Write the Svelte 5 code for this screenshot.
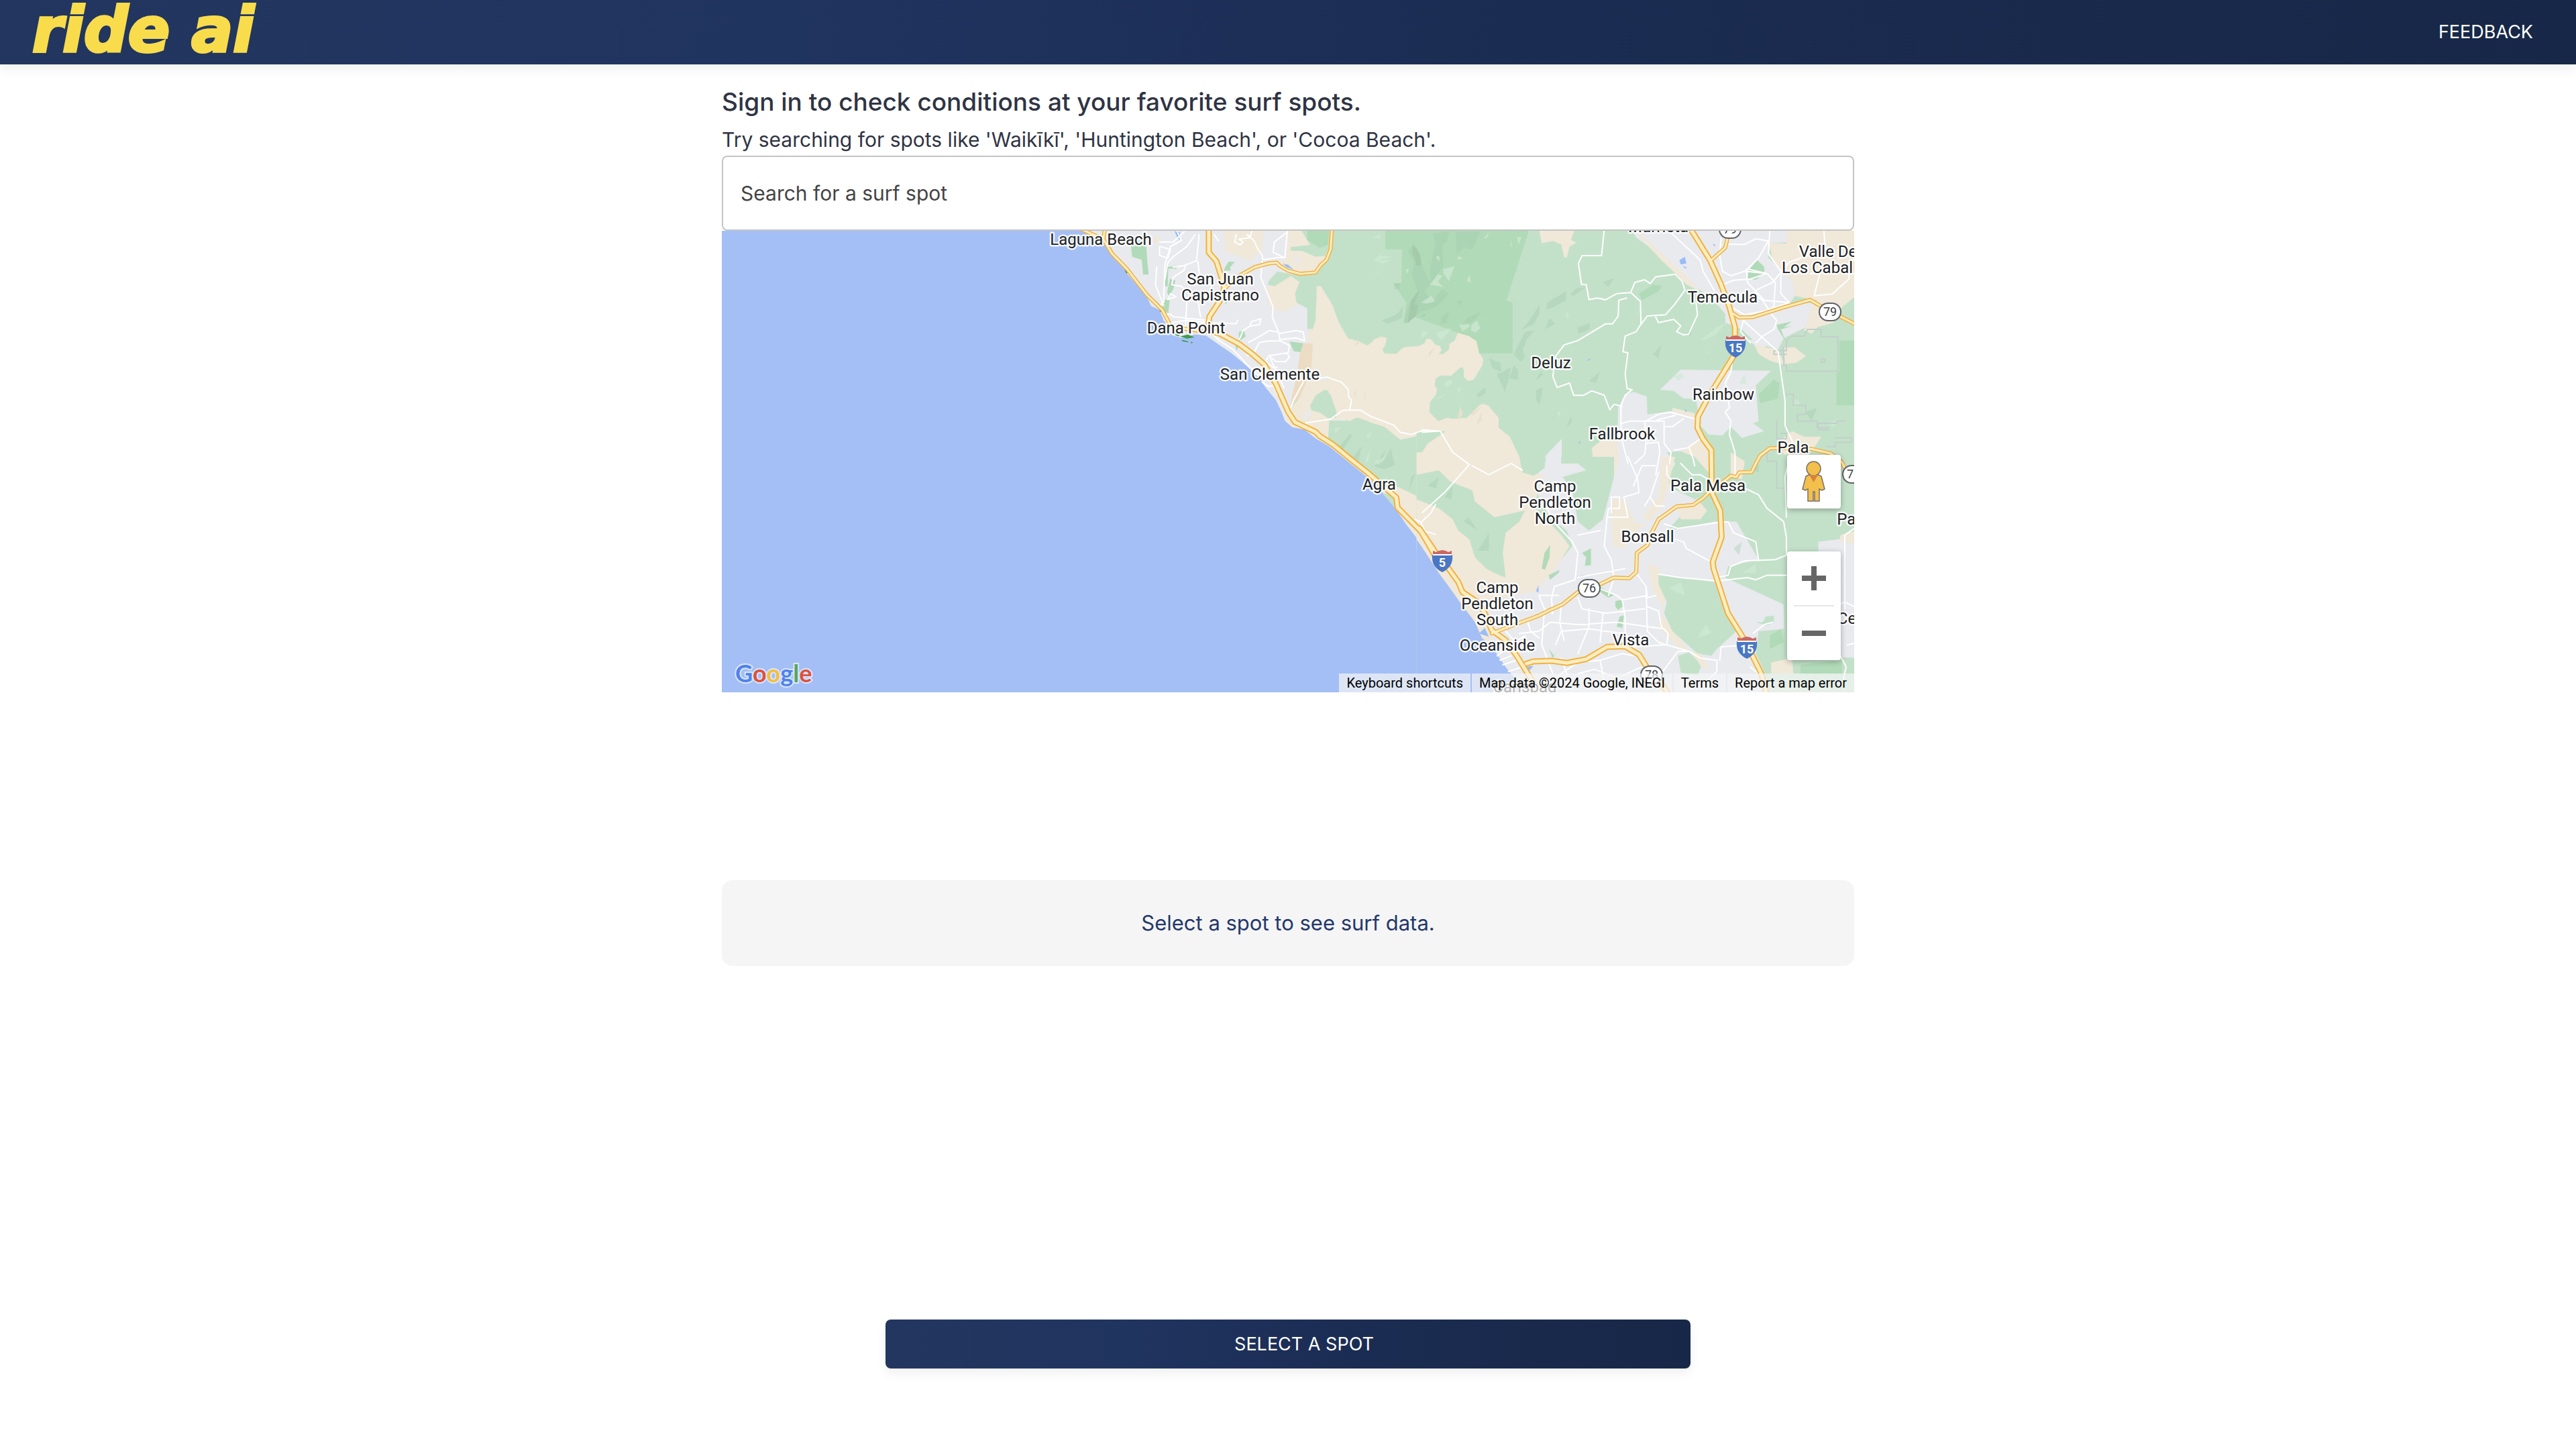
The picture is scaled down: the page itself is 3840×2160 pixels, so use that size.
<script>
  const WEST = 'translate(424 -3) scale(0.408 0.44)';
  const EAST = 'translate(1044 -3) scale(0.4145 0.3333)';
  const HILLS = 'translate(904 -3) scale(0.3333)';

  const westAreas = [
    ['land', 'M270 0L320 30 355 50 385 90 432 135 440 150 510 225 530 262 560 275 575 310 600 345 605 360 640 370 690 358 730 362 780 395 820 420 860 450 890 475 930 512 945 535 985 580 1003 615 1018 650 1045 672 1090 680 1130 710 1180 737 1230 775 1310 835 1350 865 1380 900 1420 945 1460 1000 1510 1060 1568 1130V0Z'],
    ['sand', 'M790 0H940L932 95 925 110 880 105 795 75 800 40Z'],
    ['sand', 'M1030 0H1190L1185 80 1130 150 1060 145 1035 125 1000 120 1025 95Z'],
    ['sand', 'M530 30L565 28 558 45 540 50Z'],
    ['urban', 'M1050 110L1062 95 1070 100 1068 118ZM900 95L918 80 932 95 925 115 905 112Z'],
    ['green', 'M1075 0H1182V60L1165 92 1130 95 1080 75 1040 75 1040 62 1110 55Z'],
    ['park', 'M1100 0H1180L1175 55 1145 65 1100 38Z'],
    ['sand', 'M950 200L990 170 1040 160 1072 180 1055 235 1070 255 1020 280 970 270 960 240Z'],
    ['sand', 'M1135 195H1150L1190 255 1215 320 1245 375 1320 395 1350 375 1390 365 1375 390 1385 420 1450 420 1510 380 1550 375 1568 400V700L1440 712 1380 680 1285 640 1180 650 1175 712 1130 708 1090 680 1045 672 1018 650 1040 600 1060 500 1110 400 1100 350 1120 340Z'],
    ['green', 'M1195 0H1568V400L1550 375 1510 380 1450 422 1385 420 1375 390 1390 365 1350 375 1320 395 1245 375 1215 320 1190 255 1150 195 1135 195 1130 310 1120 340 1100 340 1100 270 1060 250 1055 220 1072 180 1040 160 980 195 955 190 960 175 990 145 1050 155 1130 155 1180 100Z'],
    ['bluff', 'M1078 388H1120L1115 470 1075 570 1035 610 1045 560 1062 500Z'],
    ['park', 'M1035 382L1085 388 1075 418 1050 415ZM1060 580L1068 572 1045 605Z'],
    ['green', 'M1110 600L1130 565 1160 547 1180 548 1207 620 1205 640 1175 642 1150 625 1115 615ZM1545 590L1568 575V650L1545 635Z'],
    ['urban', 'M1080 645L1105 613 1115 620 1105 640ZM1150 500L1172 500 1175 515 1152 512ZM1305 622L1320 618 1335 628 1315 632Z'],
    ['green', 'M1180 650L1240 650 1285 640 1380 670 1440 715 1568 690V720L1510 750 1530 780 1568 830V930L1480 900 1400 870 1350 850 1290 810 1240 775 1175 725Z'],
    ['shade', 'M1210 745L1255 695 1265 700 1225 755ZM1265 775L1300 735 1285 790ZM1345 805L1385 750 1370 800 1405 745 1420 800 1380 815ZM1470 890L1480 840 1495 830ZM1500 900L1510 880 1512 910Z'],
    ['light', 'M1200 675L1225 672 1200 695ZM1315 700L1335 690 1325 712ZM1345 790L1390 770 1360 800ZM1310 790L1330 745 1322 790Z'],
    ['green', 'M1375 898L1400 895 1425 920 1420 945Z'],
    ['sand', 'M1420 870L1568 935V1130L1420 945 1425 915 1415 900Z'],
    ['sand', 'M1568 700V830L1550 800 1515 770 1512 745 1560 732Z'],
    ['park', 'M455 50L510 30 515 105 520 155 500 155 495 105 460 95ZM585 130L628 125 620 135 592 135 590 195 578 195ZM598 170L618 175 612 200 595 232 588 215ZM580 240L597 240 592 285 565 280ZM800 130L812 112 835 112 818 130 820 142 795 142ZM850 350L868 345 875 365 855 378 842 415 835 390 850 380ZM800 235L815 245 800 255Z'],
    ['reef', 'M605 355L640 352 630 365ZM635 365L665 358 688 368 660 372ZM640 376L660 380 668 385 645 382ZM675 382L682 386 676 389ZM432 140L447 146 440 152ZM560 272L570 280 562 282Z'],
    ['lake', 'M615 8L635 12V38L625 30ZM1010 118L1030 122 1050 138 1025 130Z'],
  ];

  const eastAreas = [
    ['green', 'M-20 0H1560V2090H-20Z'],
    ['sand', 'M420 0H550L535 50 555 62 530 80 520 130 510 125 500 70 470 55 430 65Z'],
    ['urban', 'M750 0H1310V60L1255 65 1245 130 1330 230 1345 290 1320 340 1420 330 1380 440 1300 490 1280 540 1200 510 1150 450 1090 420V380L1040 310 960 240 870 130 770 40Z'],
    ['sand', 'M770 20L800 35 860 110 960 225 1000 280 950 250 920 210 860 140Z'],
    ['sand', 'M1310 0H1560V300L1540 320 1510 350 1480 420 1375 455 1400 350 1420 320 1340 300 1330 230 1260 150 1250 65H1310Z'],
    ['park', 'M1175 185L1205 140 1230 170V200L1200 228 1170 222ZM1275 430L1330 415 1300 440 1330 435 1290 450 1308 505 1280 450ZM1500 500H1560V790H1490V640H1500ZM1210 740L1265 675 1285 690 1280 760 1215 780ZM780 290L830 250 862 255 850 280 790 320Z'],
    ['light', 'M1000 500L1060 440 1095 420 1050 480ZM1330 750L1360 780 1340 800ZM1460 870L1500 850 1480 890Z'],
    ['shade', 'M600 680L640 640 625 690ZM830 560L860 520 850 580ZM950 470L970 440 965 480ZM650 240L690 220 670 260ZM1380 820L1420 800 1400 860Z'],
    ['sand', 'M-20 500L30 490 60 540 95 510 125 465 190 500 205 550 220 590 190 660 170 680 150 650V615L100 640 50 660 40 730 25 770V820L60 862 160 845 210 785 235 790 270 840 275 890 315 930 350 1020V1090H-20Z'],
    ['green', 'M-20 910L85 905 50 935 20 960 0 1000H-20Z'],
    ['urban', 'M930 630L1255 635 1200 700 1210 860 1190 870 1230 905 1150 935 1110 885 1080 925 1030 920 1000 880 985 760 940 760 905 725 855 720Z'],
    ['light', 'M905 660L930 645 945 660 920 680ZM1140 690L1160 650 1165 695Z'],
    ['urban', 'M1015 560L1200 490 1240 520 1220 545 1180 510Z'],
    ['green', 'M1010 570L1090 520 1110 470 1180 505 1230 560 1180 600 1020 600Z'],
    ['sand', 'M1195 520L1280 540 1305 610 1250 590 1210 560ZM1300 530L1340 530 1380 570 1345 600 1305 605ZM1370 450L1430 430 1400 470Z'],
    ['sand', 'M1285 950L1330 905 1375 930 1435 930 1420 960 1390 1010 1300 1010ZM900 800L980 825V855L900 830Z'],
    ['urban', 'M440 1020L502 940V1040L700 1040 705 800 730 740 760 730 808 750 810 830 900 815 980 850 1000 940 930 1000 1010 1000 1010 1180 880 1350 1050 1310 1130 1310 1210 1480 1100 1510 1090 1560 1300 1680 1310 2090H120V1640L420 1600 540 1420 520 1350 460 1290 400 1150Z'],
    ['sand', 'M610 980L700 890 705 1050 690 1110 620 1110ZM930 1000L1000 940 1035 990 1035 1100 1000 1110 960 1030ZM1110 1000L1160 1040 1150 1120 1110 1110Z'],
    ['green', 'M880 1000L930 995 980 1020 1030 1090 1040 1180 980 1210 900 1160 880 1120 910 1050Z'],
    ['sand', 'M-20 1020H350L360 1090 440 1100 400 1240 500 1370 530 1420 480 1520 410 1620 260 1660 180 1650 140 1620 260 1830 -20 1430Z'],
    ['green', 'M350 1020H445L440 1070 400 1105 360 1090ZM-20 1100L60 1080 100 1130 180 1170 190 1220 260 1290 370 1260 350 1310 300 1360 290 1450 300 1560 260 1540 230 1520 190 1470 170 1390 130 1350 110 1300 60 1250 -20 1210Z'],
    ['shade', 'M20 1150L60 1110 50 1160ZM80 1200L110 1150 105 1210ZM200 1440L240 1360 240 1440ZM150 1310L165 1290 200 1350ZM600 1260L640 1220 630 1290ZM1190 1080L1210 1050V1090ZM1120 1430L1150 1400 1140 1460Z'],
    ['park', 'M430 1520L440 1450 460 1415 458 1470 442 1525ZM575 1450L607 1430V1505L585 1508 590 1470ZM640 1600L690 1640 670 1650 635 1620ZM695 1665L715 1660 725 1685 705 1705 695 1690ZM455 1550L495 1525 490 1540 460 1570ZM455 1880L475 1910 500 1865 470 1920ZM700 1780L710 1735 725 1730 720 1785Z'],
    ['green', 'M500 1020H690V1110L650 1300 600 1350 560 1310 540 1170 505 1110 590 1080 560 1050H500Z'],
    ['sand', 'M680 1210H725L770 1320H810L760 1360 730 1430 685 1420ZM860 1020H910L890 1120 870 1220 820 1310 790 1290 850 1200ZM915 1250L1000 1225 1025 1260 1000 1300 930 1300Z'],
    ['urban', 'M1425 1400L1554 1380V2000L1370 1900 1310 1700 1420 1700Z'],
    ['sand', 'M1505 1370L1560 1350V1410L1500 1400ZM810 1500L850 1515 860 1560 880 1640 860 1720 960 1890 920 1870 850 1780 870 1700 830 1620Z'],
    ['green', 'M850 1545L930 1560 1050 1580 1090 1700 1130 1800 1060 1880 1040 1910 990 1900 900 1800 870 1720 880 1670 850 1590Z'],
    ['light', 'M890 1610L930 1580 945 1640ZM990 1830L1020 1770 1040 1810ZM1150 1540L1200 1500 1200 1540Z'],
    ['green', 'M920 1910L960 1895 1005 1950 990 2000 930 1985ZM1210 1800L1300 1790 1330 1870 1320 1920 1350 1900 1560 1920V2090H1240L1230 1980 1200 1900ZM1200 1760L1225 1760 1235 1735 1265 1730V1760L1240 1775Z'],
    ['park', 'M1360 1950L1510 1930V1990H1360ZM1250 1820L1290 1790 1300 1850 1250 1880Z'],
    ['sand', 'M1255 1940L1330 1920 1335 1990 1255 1990ZM965 1890L1000 1900 1030 1960 1010 1970Z'],
    ['sand', 'M-20 1330L130 1610 235 1790 255 1860 215 1830 -20 1440Z'],
    ['water', 'M-20 1390L0 1425 60 1540 90 1590 130 1660 190 1760 215 1830 245 1860 300 1960 340 2020 370 2090H-20Z'],
    ['lake', 'M925 140L945 125 950 155 930 160ZM938 165L952 175 945 178ZM1045 65L1056 75 1050 78ZM595 585L607 580 598 592ZM945 805L953 815 947 820ZM563 955L570 948 566 963ZM410 1620L418 1595 419 1628ZM205 1810L225 1785 240 1825ZM370 1960L400 1955 380 1985ZM555 1560L580 1550 575 1560Z'],
  ];

  const hillAreas = [
    ['green', 'M40 0H940V560H680L240 560 40 300Z'],
    ['sand', 'M0 320L20 345 45 415 88 490 140 505 178 525 205 495 235 482 262 488 255 520 242 540 252 558 303 560 330 535 350 528 405 525 430 512 440 492 460 494 480 520 500 524 507 545 470 585 447 610 450 632 480 625 505 600 520 555 540 540 542 515 565 500 580 465 630 480 663 502 675 560 693 580 690 610 650 675 625 680 605 662 610 635 595 615 580 630 550 657 500 657 480 670 475 700 487 717 480 745 455 775 452 832 490 862 530 845 555 850 625 845 690 783 715 790 762 845V900H305L200 870 130 842 95 860 50 845 22 780 15 750 0 730Z'],
    ['park', 'M255 0H900L797 320 825 330V557H677L663 502 630 480 580 465 380 392 360 420 335 422 350 333 293 245 327 242 330 92H255Z'],
    ['shade', 'M465 20L540 12 530 60 510 70 515 165 455 250 430 280 480 340 380 392 360 420 340 420 360 340 400 280 375 210 385 150 355 100 380 70 410 110 420 165 455 240 455 180 480 60ZM570 15L680 12 650 85 630 92 610 80 575 110ZM510 270L540 290 490 345 430 370ZM620 400L690 368 640 420 600 425ZM510 390L540 370 530 420 500 430ZM575 325L603 320 585 345ZM755 320L782 288 765 310ZM815 175L855 190 845 190ZM290 243L325 243 315 265 300 275Z'],
    ['ridge', 'M378 70L400 95 412 125 415 163 395 165 385 125 375 105ZM408 275L385 340 403 340 390 392 355 420 370 320ZM410 395L435 378 430 390Z'],
    ['light', 'M203 145L250 90 230 120 285 125ZM205 140L290 140 240 155ZM197 208L262 180 210 205ZM205 40L232 22 230 45ZM455 250L490 205 512 210 490 235 515 262ZM515 180L565 168 540 235 515 200ZM480 125L497 122 497 148ZM585 120L603 135 578 138ZM620 235L630 205 640 240ZM415 330L460 300 478 325 440 335ZM585 428L632 428 630 440 600 458ZM640 430L665 410 680 445 660 465 638 455ZM418 460L450 458 418 492ZM480 468L550 445 505 500ZM520 690L550 670 555 690 525 710ZM575 715L600 712 580 735ZM470 760L525 742 500 758ZM348 180L362 180 350 205ZM1065 368L1078 385 1065 408ZM1025 820L1040 815 1030 848ZM695 45L720 15 710 40ZM845 35L865 40 850 72ZM815 35L822 80 817 80Z'],
    ['shade', 'M240 410L310 380 335 345 330 400 265 425ZM860 455L900 410 945 340 945 380 920 425ZM980 330L1065 278 1062 320 1000 355 975 360ZM970 450L990 400 1015 425ZM1080 295L1110 265 1150 262 1100 300ZM830 560L880 460 925 455 890 490 870 540 880 575 860 595ZM720 580L770 600 775 640 735 625ZM780 640L815 620 810 660 790 730 755 650ZM830 610L848 630 848 675 810 670ZM665 740L700 710 705 735 670 755ZM930 720L960 710 945 790 930 765ZM925 680L950 640 960 655ZM1115 440L1170 422 1170 450 1120 470ZM1065 890L1085 840 1090 865Z'],
    ['mesa', 'M120 525L140 490 135 515ZM447 560L475 530 455 570ZM115 745L125 715 122 750ZM158 730L170 785 165 740ZM580 840L590 795 603 830 585 850ZM635 830L690 790 650 835ZM663 875L685 820V860Z'],
  ];

  const westStreets = [
    'M620 0L640 40 600 60 580 120 575 250 555 262M690 20L660 60 610 95 590 115 580 170M560 60L600 70 590 100 560 90ZM550 130L545 190 560 225 575 260M610 130L650 125 695 108 705 20M655 120L650 140 610 165 605 190 640 195 655 210 640 215 660 245 655 330M700 110L705 150 750 195 745 225 700 240 710 300M600 220L590 240 620 230ZM585 290L600 290 610 298 735 310M560 45L610 45 650 10M590 320L660 310 740 318 840 322 845 310M760 20L775 40M840 20L835 45 855 55 865 45 850 35 890 30 900 0M880 20L905 40 920 70 935 90 938 105 990 98 1018 98 1028 0M1028 10L980 45 975 80 1015 98',
    'M935 110L930 165 975 265 972 300 995 350 1000 380 960 380 925 385 905 420 880 430M995 350L960 345 925 365 885 385M930 305L895 315 890 330 865 345 852 375M930 305L925 325 890 330M995 355L1060 345 1085 350 1090 380 1060 370 1000 375M1000 380L1035 395 1030 420 960 430 940 460 930 445 905 430M960 430L985 450 1020 450 1035 435 1025 420M965 440L985 480 1000 510 1015 540M950 450L975 470 990 470M935 520L960 535 975 530 990 560M745 350L780 380 830 410 880 460 930 505',
    'M1040 605L1050 580 1085 520M1130 510L1170 502 1225 520 1250 545 1250 570 1262 580 1255 612M1095 658L1185 645 1230 615 1295 615 1330 635 1415 665 1440 690 1480 697 1525 682 1568 685M1568 935L1550 965 1515 995 1495 985M1515 995L1530 1025 1568 1035',
  ];
  const eastStreets = [
    'M655 0L645 120 575 120 562 155 573 248 590 250 600 317 630 310 660 318 700 290 750 285 765 240 800 228 820 245 840 215 910 203 935 235 945 275 910 335 875 385 810 390 785 430 770 460 730 480 722 550 740 555 730 650 737 715 755 720 730 745 715 790 715 870 720 950 740 1050M750 285L785 325 787 430M735 310L707 320 705 390 685 425 660 425 560 500 510 520 480 570 470 660 485 710 530 690 545 745 580 745 610 725 655 745 675 810 690 785 720 795M840 395L850 420 905 405 930 435 915 460 940 475 958 472 990 385 985 330',
    'M890 12L1000 140 1010 190 1050 275M1075 40L1070 120 1080 190 1110 210 1160 190 1240 200 1170 180 1210 130 1245 55 1200 45 1160 70 1105 70M1250 12L1245 110 1290 190 1290 290 1320 330 1230 320 1170 240 1165 180M1080 250L1120 230 1180 225 1240 200 1270 240 1265 350 1245 360 1225 320 1190 290M1200 275L1260 240 1320 150 1450 90 1445 12M1395 200L1430 200 1410 300 1475 292 1535 225V150M1155 410L1145 460 1180 510M1155 410L1280 550 1305 770 1305 880 1335 960M1110 350L1160 385 1245 365 1275 410 1265 450 1225 480 1200 510M1240 365L1320 330',
    'M1120 560L1110 640 1090 690 1105 800 1090 820 1110 860 1105 920 1125 1000 1125 1110M715 870L750 860 800 860 805 960 850 955M800 860L870 860V960L895 1000 890 1050M805 860L850 830 890 820 980 850M845 855L910 835M870 885L900 885 940 850M805 960L800 1010 765 1050M850 955L855 1000 840 1100M1000 940L955 980 905 990M960 980L975 1030 980 1060',
    'M0 900L65 905 110 1000 170 1055 80 1180 0 1270M180 1060L240 1100 320 1050 360 1080M0 910L60 905',
    'M740 1020L775 1120 780 1180 725 1200 740 1290 665 1290 655 1420 680 1480 690 1560M850 1090L820 1200 840 1240 870 1240M820 1200L800 1240M760 1150L780 1090 790 1060 840 1060M665 1290L670 1250 710 1250 710 1200 680 1200 680 1270M440 1230L480 1320 540 1400 560 1450 550 1570 475 1600 465 1660 470 1720 440 1700 420 1640 490 1640M730 1520L600 1550 560 1560M560 1370L640 1350M770 1540L805 1600 810 1650 840 1640M805 1600L810 1800 850 1850 960 1890 1000 1920 1060 1930M640 1610L700 1640 720 1660 810 1640M720 1660L730 1740 730 1860M560 1650L575 1700 660 1720 800 1700M500 1680L495 1760 510 1840M440 1700L430 1860 470 1990M600 1700V1780L560 1900M650 1720L640 1850M350 1810L420 1800 460 1760 560 1770 700 1760 870 1790M690 1560L670 1640M810 1690L850 1710 860 1780 885 1810 880 1860 760 1870M480 1860L500 1800 600 1790 720 1810 790 1860',
    'M300 1800L330 1840 330 1900M270 1910L330 1850 370 1820M280 1930L320 1910M290 1950L340 1930M310 1980L360 1960M380 1760L390 1800 420 1830M440 2030L500 1990 560 1940 640 1930 720 1900 760 1910M560 1990L620 1970 700 2010 790 1960M500 1920L540 2060M640 1930L660 2060M860 1990L920 1890 960 1890M1060 1930L1060 1980 1010 2040M1070 1930L1075 1870 1130 1865M1180 1960L1260 2040M1190 1810L1230 1770 1260 1760',
    'M870 1320L920 1340 1060 1315 1100 1310 1120 1360 1200 1400 1210 1485M850 1370L940 1400 950 1430 1040 1490M850 1545L930 1560 1060 1575 1170 1560 1200 1570 1240 1550 1310 1550M1060 1560L1100 1550 1110 1510 1160 1485 1270 1480 1310 1460 1310 1380 1300 1310 1240 1250 1210 1190 1160 1160M1310 1290L1305 1110 1315 1060M1520 1700V1370L1554 1340M1554 1690L1520 1670 1500 1680M1500 1900L1525 1960 1510 2040M930 1050L970 1100 1000 1100 1040 1130M880 1060L880 1100 930 1170M1530 1860L1554 1855',
  ];

  const roads = [
    { tile: WEST, kind: 'highway', d: 'M270 0L355 35 387 85 440 135 515 225 570 275 590 310 605 335 660 340 735 350M360 0L355 35' },
    { tile: WEST, kind: 'highway', d: 'M800 200L850 160 908 130 960 117 988 115 1000 126 1030 142 1075 153 1130 148 1150 122 1170 105 1185 70 1190 0' },
    { tile: EAST, kind: 'highway', d: 'M250 1810L345 1765 420 1730 460 1705 505 1680 560 1625 640 1590 690 1560 745 1563 770 1535 772 1450 810 1415 825 1360 850 1300 915 1242 975 1235 1010 1205 1030 1180 1090 1125 1110 1105 1130 1110 1140 1090 1185 1088 1200 1050 1215 1015 1250 982 1290 980 1400 985 1470 1005 1510 1045 1520 1070' },
    { tile: EAST, kind: 'highway', d: 'M1100 30L1090 85 1040 140' },
    { tile: EAST, kind: 'highway', d: 'M1120 380L1140 397 1190 395 1290 355 1395 318 1425 340 1500 390 1560 428' },
    { tile: EAST, kind: 'freeway', d: 'M375 1945L400 1935 465 1932 520 1942 590 1925 665 1870 730 1868 780 1905 810 1965 870 2050 890 2090' },
    { tile: WEST, kind: 'freeway', d: 'M740 0V80L768 110 785 160 797 200 780 245 742 298 735 345 780 355 850 390 900 425 943 460 985 525 1030 620 1055 655 1130 688 1145 702 1195 732 1255 778 1325 830 1375 870 1425 910 1430 945 1515 1025 1565 1105' },
    { tile: EAST, kind: 'freeway', d: 'M-10 1340L50 1450 95 1520 130 1580 145 1625 205 1675 225 1720 250 1795 300 1840 340 1910 400 2030 420 2090' },
    { tile: EAST, kind: 'freeway', d: 'M965 0L1035 140 1075 250 1105 350 1125 440V560L1085 640 1035 740 992 840 990 890 1010 940 1040 990 1042 1180 1072 1260 1077 1380 1045 1490 1048 1520 1100 1720 1160 1840 1220 1990 1240 2090' },
  ];

  const labels = [
    { x: 565, y: 21, lines: ['Laguna Beach'] },
    { x: 743, y: 80, lines: ['San Juan', 'Capistrano'] },
    { x: 692, y: 153, lines: ['Dana Point'] },
    { x: 817, y: 222, lines: ['San Clemente'] },
    { x: 980, y: 386, lines: ['Agra'] },
    { x: 1236, y: 205, lines: ['Deluz'] },
    { x: 1396, y: 2, lines: ['Murrieta'] },
    { x: 1492, y: 107, lines: ['Temecula'] },
    { x: 1493, y: 252, lines: ['Rainbow'] },
    { x: 1342, y: 311, lines: ['Fallbrook'] },
    { x: 1597, y: 331, lines: ['Pala'] },
    { x: 1649, y: 39, lines: ['Valle De', 'Los Caballos'] },
    { x: 1242, y: 389, lines: ['Camp', 'Pendleton', 'North'] },
    { x: 1470, y: 388, lines: ['Pala Mesa'] },
    { x: 1380, y: 464, lines: ['Bonsall'] },
    { x: 1156, y: 540, lines: ['Camp', 'Pendleton', 'South'] },
    { x: 1156, y: 626, lines: ['Oceanside'] },
    { x: 1355, y: 618, lines: ['Vista'] },
    { x: 1700, y: 438, lines: ['Pauma'] },
    { x: 1698, y: 586, lines: ['Center'] },
    { x: 1197, y: 688, lines: ['Carlsbad'] },
  ];

  const interstates = [
    { x: 1511, y: 172, n: '15' },
    { x: 1074, y: 492, n: '5' },
    { x: 1528, y: 621, n: '15' },
  ];
  const stateRoutes = [
    { x: 1503, y: -2, n: '79' },
    { x: 1652, y: 121, n: '79' },
    { x: 1293, y: 533, n: '76' },
    { x: 1687, y: 363, n: '76' },
    { x: 1386, y: 662, n: '78' },
  ];

  const brand = [['b', 'G'], ['r', 'o'], ['y', 'o'], ['b', 'g'], ['g', 'l'], ['r', 'e']];
</script>

<header class="topbar">
  <a class="logo" href="/">ride ai</a>
  <button class="feedback" type="button">Feedback</button>
</header>

<main class="content">
  <h1>Sign in to check conditions at your favorite surf spots.</h1>
  <p class="hint">Try searching for spots like 'Waikīkī', 'Huntington Beach', or 'Cocoa Beach'.</p>
  <input class="search" type="text" aria-label="Search for a surf spot" placeholder="Search for a surf spot" />

  <section class="map" aria-label="Map">
    <svg class="canvas" viewBox="0 0 1688 688" preserveAspectRatio="xMidYMid slice">
      <g transform={WEST}>
        {#each westAreas as [kind, d]}<path class={kind} {d} />{/each}
      </g>
      <g transform={EAST}>
        {#each eastAreas as [kind, d]}<path class={kind} {d} />{/each}
      </g>
      <g transform={HILLS}>
        {#each hillAreas as [kind, d]}<path class={kind} {d} />{/each}
      </g>
      <g transform={WEST}>
        {#each westStreets as d}<path class="street" {d} />{/each}
      </g>
      <g transform={EAST}>
        <path class="boundary" d="M1300 530V610H1310V637H1495V483H1435V450H1385L1375 480H1330L1310 500V545H1265V562H1310M1435 582H1448V598H1435ZM1310 740H1335V790H1380V830H1350V860H1420V890H1460V900H1425V870H1490V860H1520M1275 860V940H1310V915H1290M1485 935H1545V955H1485V975H1455M1240 1000V1040H1275V1160H1300" />
        {#each eastStreets as d}<path class="street" {d} />{/each}
      </g>
      {#each roads as road}
        <g transform={road.tile}><path class="casing {road.kind}" d={road.d} /></g>
      {/each}
      {#each roads as road}
        <g transform={road.tile}><path class="surface {road.kind}" d={road.d} /></g>
      {/each}
      {#each labels as label}
        {#each label.lines as line, i}
          <text class="place" x={label.x} y={label.y + i * 24}>{line}</text>
        {/each}
      {/each}
      {#each interstates as s}
        <g transform="translate({s.x} {s.y})">
          <path fill="#4a77c4" d="M-15 -9H15C16 3 12 11 0 17C-12 11 -16 3 -15 -9Z" />
          <path fill="#fff" d="M-14 -11H14V-8H-14Z" />
          <path fill="#cb6663" d="M-14 -10V-15L-9 -13 -5 -15 0 -16 5 -15 9 -13 14 -15V-10Z" />
          <text class="shield" x="0" y="9">{s.n}</text>
        </g>
      {/each}
      {#each stateRoutes as s}
        <g transform="translate({s.x} {s.y})">
          <rect x="-16" y="-13" width="32" height="26" rx="13" fill="#fff" stroke="#5f6368" stroke-width="2" />
          <text class="route" x="0" y="6">{s.n}</text>
        </g>
      {/each}
    </svg>

    <a class="google" href="https://maps.google.com" aria-label="Google">{#each brand as [tone, ch]}<span class={tone}>{ch}</span>{/each}</a>

    <div class="controls">
      <button class="control" type="button" aria-label="Street View">
        <svg width="36" height="62" viewBox="0 0 36 62">
          <g fill="#f2c04b" stroke="#77706a" stroke-width="1.5">
            <path d="M10 21L6 23 1 42 5 44 9 42 9 60H17V46H19V60H26V42L30 44 34 42 29 23 25 21Z" />
            <circle cx="17.500" cy="11.500" r="10.500" />
          </g>
          <path fill="#d58340" d="M11 21H24L17.500 32Z" />
        </svg>
      </button>
      <div class="zoom">
        <button type="button" aria-label="Zoom in">
          <svg width="36" height="36" viewBox="0 0 36 36"><path fill="#666" d="M14 0h8v14h14v8H22v14h-8V22H0v-8h14z" /></svg>
        </button>
        <button type="button" aria-label="Zoom out">
          <svg width="36" height="36" viewBox="0 0 36 36"><path fill="#666" d="M0 14h36v8H0z" /></svg>
        </button>
      </div>
    </div>

    <div class="legal">
      <button type="button">Keyboard shortcuts</button>
      <span>Map data ©2024 Google, INEGI</span>
      <a href="https://www.google.com/help/terms_maps/">Terms</a>
      <a href="https://www.google.com/maps">Report a map error</a>
    </div>
  </section>

  <p class="empty">Select a spot to see surf data.</p>
  <button class="select" type="button">Select a spot</button>
</main>

<style>
  :global(body) {
    background: #fff;
    font-family: Inter, "Liberation Sans", sans-serif;
    color: #2f3443;
  }

  button,
  input {
    font: inherit;
  }

  button {
    border: 0;
    padding: 0;
    background: none;
    cursor: pointer;
  }

  .topbar {
    box-sizing: border-box;
    height: 96px;
    padding: 0 64px 0 48px;
    display: flex;
    align-items: center;
    justify-content: space-between;
    background: linear-gradient(90deg, #23365f, #203460 30%, #1b2c52 60%, #172747);
    box-shadow: 0 8px 16px rgba(0, 0, 0, 0.06);
  }

  .logo {
    padding: 0 8px 4px 0;
    color: #f8dc4c;
    font: italic 700 92px/92px "DejaVu Sans", sans-serif;
    -webkit-text-stroke: 4px #f8dc4c;
    text-decoration: none;
  }

  .feedback {
    color: #fff;
    font-size: 27px;
    line-height: 48px;
    text-transform: uppercase;
  }

  .content {
    max-width: 1688px;
    margin: 0 auto;
    padding: 24px 0 120px;
    display: flex;
    flex-direction: column;
  }

  h1 {
    margin: 0;
    font-size: 37px;
    font-weight: 500;
    line-height: 64px;
  }

  .hint {
    margin: 0;
    font-size: 30px;
    line-height: 48px;
  }

  .search {
    box-sizing: border-box;
    width: 100%;
    height: 112px;
    padding: 0 26px;
    border: 2px solid #c4c4c4;
    border-radius: 8px;
    background: #fff;
    color: #444;
    font-size: 30px;
  }

  .search::placeholder {
    color: #444;
    opacity: 1;
  }

  .map {
    position: relative;
    height: 688px;
    overflow: hidden;
    background: #a4bff5;
    font-family: Roboto, "Liberation Sans", sans-serif;
  }

  .canvas {
    display: block;
    width: 100%;
    height: 100%;
  }

  .land,
  .urban { fill: #e8eaee; }
  .green { fill: #c3e1c9; }
  .park { fill: #b1dab8; }
  .sand { fill: #f0e8d9; }
  .bluff { fill: #ebdcc3; }
  .shade { fill: #9fc9a9; fill-opacity: 0.35; }
  .ridge { fill: #a5caab; }
  .mesa { fill: #e8dfcc; }
  .light { fill: #d0e9d4; fill-opacity: 0.7; }
  .reef { fill: #3f9b50; }
  .water { fill: #a4bff5; }
  .lake { fill: #9bbcf6; }

  .street,
  .boundary,
  .casing,
  .surface {
    fill: none;
    stroke-linejoin: round;
    stroke-linecap: round;
    vector-effect: non-scaling-stroke;
  }

  .street { stroke: #fff; stroke-width: 2px; }
  .boundary { stroke: #c3cfcb; stroke-width: 2px; }
  .casing { stroke: #f1b140; }
  .surface { stroke: #fdedc0; }
  .casing.freeway { stroke-width: 9px; }
  .surface.freeway { stroke-width: 5px; }
  .casing.highway { stroke-width: 6px; }
  .surface.highway { stroke-width: 3px; }

  .place {
    fill: #202124;
    stroke: #fff;
    stroke-opacity: 0.85;
    stroke-width: 5px;
    stroke-linejoin: round;
    paint-order: stroke;
    font-size: 24px;
    text-anchor: middle;
  }

  .shield,
  .route {
    text-anchor: middle;
    font-size: 18px;
  }

  .shield { fill: #fff; font-weight: 700; }
  .route { fill: #3c4043; }

  .google {
    position: absolute;
    left: 20px;
    bottom: 7px;
    font: 700 36px/44px Lato, sans-serif;
    text-decoration: none;
    -webkit-text-stroke: 4px #dbe6fb;
    paint-order: stroke;
  }

  .b { color: #4f82ec; }
  .r { color: #dc5140; }
  .y { color: #f3bf3f; }
  .g { color: #56a55f; }

  .controls {
    position: absolute;
    right: 20px;
    bottom: 48px;
    display: flex;
    flex-direction: column;
    gap: 64px;
  }

  .control,
  .zoom {
    width: 80px;
    border-radius: 4px;
    background: #fff;
    box-shadow: 0 2px 8px rgba(0, 0, 0, 0.3);
  }

  .control,
  .zoom button {
    height: 80px;
    display: flex;
    align-items: center;
    justify-content: center;
  }

  .zoom {
    display: flex;
    flex-direction: column;
    align-items: center;
  }

  .zoom button {
    width: 60px;
  }

  .zoom button + button {
    border-top: 2px solid #e6e6e6;
    height: 82px;
  }

  .legal {
    position: absolute;
    right: 0;
    bottom: 0;
    display: flex;
    gap: 2px;
    font-size: 20px;
    line-height: 28px;
  }

  .legal > * {
    padding: 0 11px;
    background: rgba(245, 245, 245, 0.7);
    color: #000;
    text-decoration: none;
    white-space: nowrap;
  }

  .empty {
    margin: 280px 0 0;
    padding: 40px;
    border-radius: 16px;
    background: #f5f5f5;
    color: #23386a;
    font-size: 31px;
    line-height: 48px;
    text-align: center;
  }

  .select {
    width: 100%;
    max-width: 1200px;
    height: 73px;
    margin: 527px auto 0;
    padding-left: 48px;
    border-radius: 8px;
    background: linear-gradient(90deg, #23365f, #203460 30%, #1b2c52 60%, #172747);
    box-shadow: 0 8px 16px rgba(0, 0, 0, 0.06);
    color: #fff;
    font-size: 27px;
    text-transform: uppercase;
  }
</style>
